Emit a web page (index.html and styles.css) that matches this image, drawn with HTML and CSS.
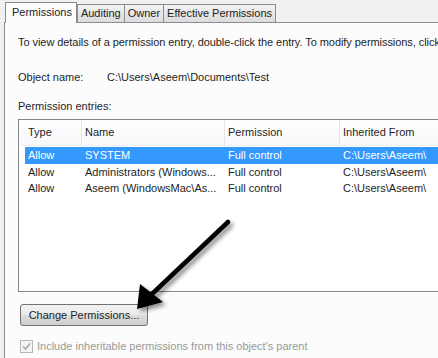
FILE: index.html
```html
<!DOCTYPE html>
<html>
<head>
<meta charset="utf-8">
<link rel="stylesheet" href="styles.css">
</head>
<body>
<div class="win">
  <div class="tabs">
    <div class="tab active">Permissions</div>
    <div class="tab">Auditing</div>
    <div class="tab">Owner</div>
    <div class="tab">Effective Permissions</div>
  </div>
  <div class="panel">
    <p class="intro">To view details of a permission entry, double-click the entry. To modify permissions, click Change Permissions.</p>
    <div class="obj"><span class="lbl">Object name:</span><span>C:\Users\Aseem\Documents\Test</span></div>
    <p class="entries">Permission entries:</p>
    <div class="list">
      <div class="row head">
        <div class="c1">Type</div><div class="c2">Name</div><div class="c3">Permission</div><div class="c4">Inherited From</div>
      </div>
      <div class="row sel">
        <div class="c1">Allow</div><div class="c2">SYSTEM</div><div class="c3">Full control</div><div class="c4">C:\Users\Aseem\</div>
      </div>
      <div class="row">
        <div class="c1">Allow</div><div class="c2">Administrators (Windows...</div><div class="c3">Full control</div><div class="c4">C:\Users\Aseem\</div>
      </div>
      <div class="row">
        <div class="c1">Allow</div><div class="c2">Aseem (WindowsMac\As...</div><div class="c3">Full control</div><div class="c4">C:\Users\Aseem\</div>
      </div>
    </div>
    <button class="btn">Change Permissions...</button>
    <label class="chk"><span class="box"><svg width="11" height="11" viewBox="0 0 11 11"><path d="M2 5.5 L4.5 8 L9 2.5" fill="none" stroke="#a8a8a8" stroke-width="1.6"/></svg></span>Include inheritable permissions from this object's parent</label>
  </div>
  <svg class="arrow" width="438" height="358" viewBox="0 0 438 358">
    <defs>
      <filter id="sh" x="-20%" y="-20%" width="140%" height="140%">
        <feGaussianBlur in="SourceAlpha" stdDeviation="2"/>
        <feOffset dx="3" dy="3"/>
        <feComponentTransfer><feFuncA type="linear" slope="0.45"/></feComponentTransfer>
        <feMerge><feMergeNode/><feMergeNode in="SourceGraphic"/></feMerge>
      </filter>
    </defs>
    <g filter="url(#sh)">
      <line x1="228" y1="222" x2="152" y2="294" stroke="#000" stroke-width="4.5" stroke-linecap="round"/>
      <polygon points="137,309 140,284 163,302" fill="#000"/>
    </g>
  </svg>
</div>
</body>
</html>
```
FILE: styles.css
```css
html, body { margin: 0; padding: 0; }
body {
  width: 438px; height: 358px; overflow: hidden;
  font-family: "Liberation Sans", Arial, sans-serif;
  font-size: 11px; color: #1e1e1e;
  background: #f0f0f0;
}
.win { position: relative; width: 438px; height: 358px; }
.tabs {
  display: flex; padding: 2px 0 0 5px; height: 20px; align-items: flex-end;
}
.tab {
  height: 17px; line-height: 17px; padding: 0 3px;
  border: 1px solid #898c95; border-bottom: none; margin-right: -1px;
  background: linear-gradient(#f2f2f2, #dcdcdc);
  color: #222;
}
.tab.active {
  height: 20px; line-height: 19px; background: #fcfcfc; position: relative; z-index: 1;
  margin-bottom: -1px; padding: 0 4px 0 6px; margin-right: 0;
}
.panel {
  border-top: 1px solid #898c95; border-left: 1px solid #898c95;
  margin-left: 4px; background: #fcfcfc; height: 340px;
  padding: 0 0 0 13px; box-sizing: border-box;
}
.intro { margin: 0; padding-top: 11px; white-space: nowrap; overflow: hidden; height: 16px; line-height: 16px; letter-spacing: -0.06px; }
.obj { display: flex; margin-top: 19px; line-height: 16px; }
.lbl { width: 89px; }
.entries { margin: 13px 0 0; line-height: 16px; }
.list {
  margin-top: 5px; height: 173px; border: 1px solid #828790; border-right: none;
  background: #fff; box-sizing: border-box; padding-left: 6px;
}
.row { display: flex; height: 16px; line-height: 16px; white-space: nowrap; }
.row.head {
  height: 25px; line-height: 25px; margin-left: -6px; padding-left: 6px; margin-bottom: 1px;
  background: linear-gradient(#fff, #f7f8fa);
  border-bottom: 1px solid #eef0f3;
}
.row.head div { border-right: 1px solid #e3e5e8; }
.row div { padding-left: 3px; box-sizing: border-box; overflow: hidden; }
.c1 { width: 57px; }
.c2 { width: 143px; }
.c3 { width: 115px; }
.c4 { flex: 1; }
.row.head .c1 { margin-left: -6px; width: 63px; padding-left: 9px; }
.row.head .c4 { border-right: none; }
.sel { background: #3399ff; color: #fff; height: 17px; line-height: 17px; }
.btn {
  display: block; margin: 12px 0 0 2px; width: 128px; height: 22px;
  font: inherit; color: #1e1e1e; padding: 0;
  border: 1px solid #707070; border-radius: 3px;
  background: linear-gradient(#f2f2f2 0%, #ebebeb 50%, #dddddd 51%, #cfcfcf 100%);
}
.chk { display: flex; align-items: center; margin: 13px 0 0 2px; color: #999; line-height: 14px; }
.box {
  width: 11px; height: 11px; border: 1px solid #b8b8b8; background: #f4f4f4;
  margin-right: 4px; display: flex;
}
.arrow { position: absolute; left: 0; top: 0; pointer-events: none; }
```
